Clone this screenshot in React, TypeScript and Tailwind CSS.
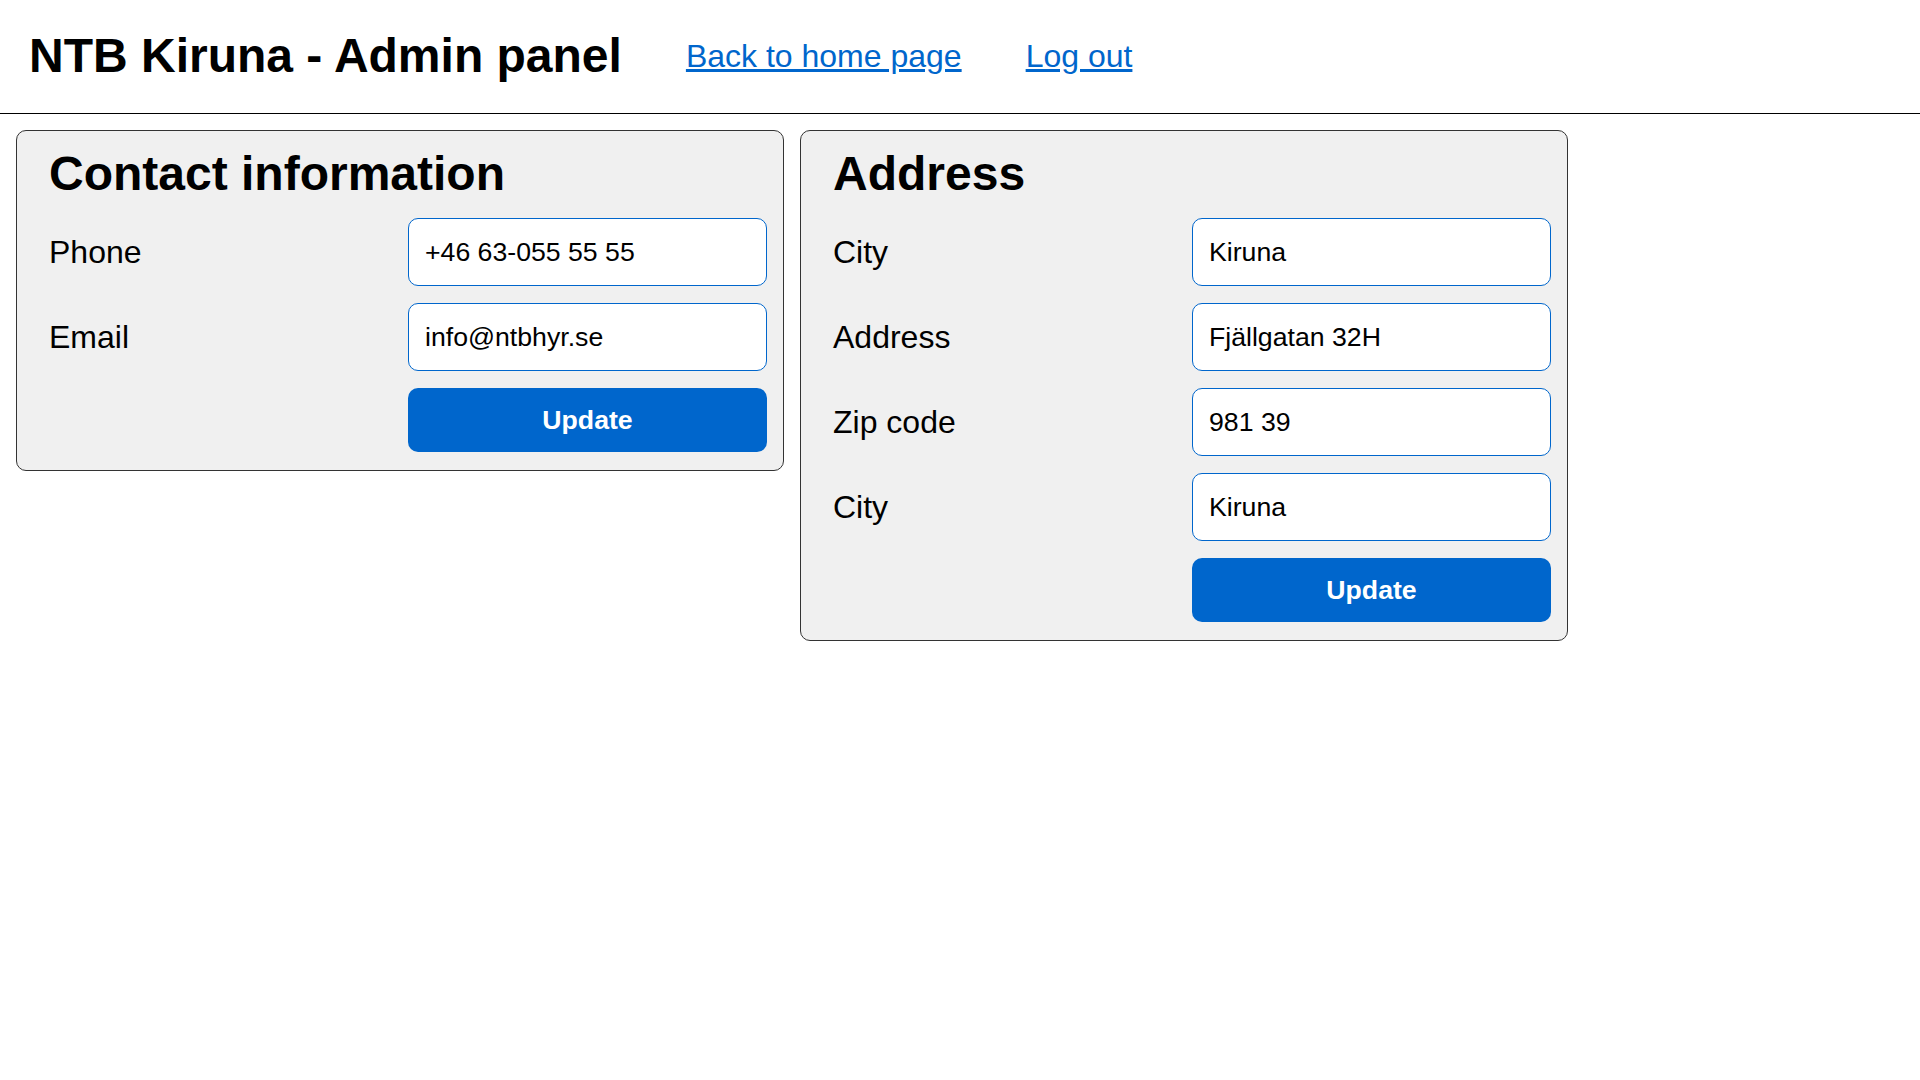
import React from "react";

const font = { fontFamily: '"Liberation Sans", Arial, sans-serif' };

function Row({ label, value }: { label: string; value: string }) {
  return (
    <>
      <label className="text-[32px] text-black leading-none">{label}</label>
      <input
        defaultValue={value}
        className="h-[68px] w-full rounded-[10px] border border-[#0066cc] bg-white pl-[16px] text-[26.67px] text-black outline-none"
        style={font}
      />
    </>
  );
}

function Card({ title, rows }: { title: string; rows: [string, string][] }) {
  return (
    <div className="w-[768px] rounded-[10px] border border-[#333333] bg-[#f0f0f0] pl-[32px] pr-[16px] pt-[15px] pb-[18px]">
      <h2 className="text-[48px] font-bold leading-[55px] text-black">{title}</h2>
      <div className="mt-[17px] grid grid-cols-2 items-center gap-y-[17px]">
        {rows.map(([l, v], i) => (
          <Row key={i} label={l} value={v} />
        ))}
        <div />
        <button
          className="h-[64px] w-full rounded-[10px] bg-[#0066cc] text-[26.67px] font-bold text-white"
          style={font}
        >
          Update
        </button>
      </div>
    </div>
  );
}

export default function App() {
  return (
    <div className="min-h-screen bg-white text-black" style={font}>
      <header className="flex h-[114px] items-center gap-[64px] border-b border-black pb-[2px] pl-[29px]">
        <h1 className="text-[48px] font-bold leading-none">NTB Kiruna - Admin panel</h1>
        <a href="#" className="text-[32px] leading-none text-[#0066cc] underline">
          Back to home page
        </a>
        <a href="#" className="text-[32px] leading-none text-[#0066cc] underline">
          Log out
        </a>
      </header>
      <main className="flex items-start gap-[16px] px-[16px] pt-[16px]">
        <Card
          title="Contact information"
          rows={[
            ["Phone", "+46 63-055 55 55"],
            ["Email", "info@ntbhyr.se"],
          ]}
        />
        <Card
          title="Address"
          rows={[
            ["City", "Kiruna"],
            ["Address", "Fjällgatan 32H"],
            ["Zip code", "981 39"],
            ["City", "Kiruna"],
          ]}
        />
      </main>
    </div>
  );
}
